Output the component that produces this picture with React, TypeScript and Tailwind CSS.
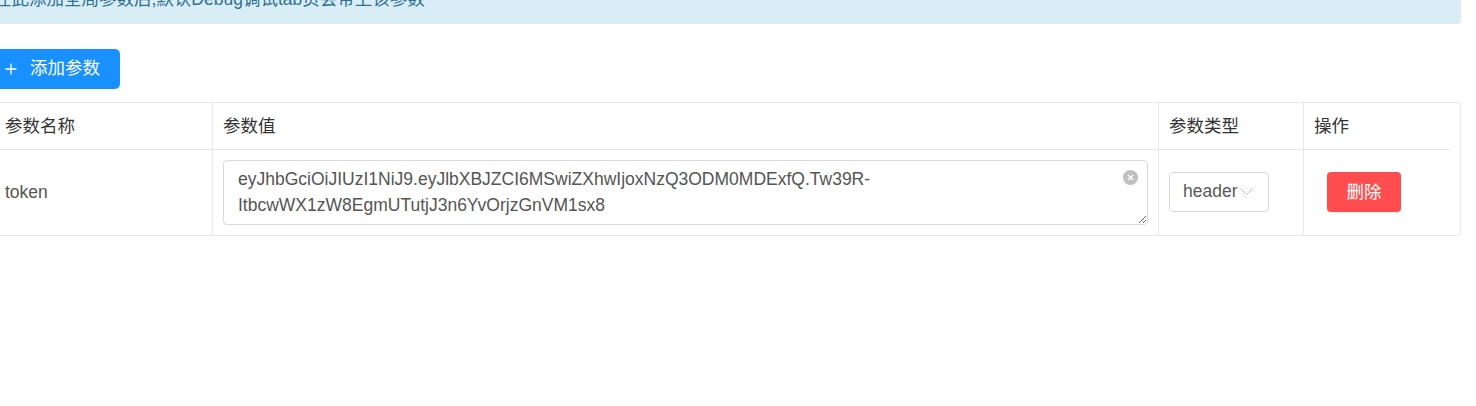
import React from 'react';

const token =
  'eyJhbGciOiJIUzI1NiJ9.eyJlbXBJZCI6MSwiZXhwIjoxNzQ3ODM0MDExfQ.Tw39R-ItbcwWX1zW8EgmUTutjJ3n6YvOrjzGnVM1sx8';

const GlobalParams: React.FC = () => {
  return (
    <div
      className="w-[1476px] h-[406px] overflow-hidden bg-white text-[17.5px]"
      style={{ fontFamily: '"Liberation Sans", "Noto Sans CJK SC", sans-serif' }}
    >
      <div className="w-[1461px] flex flex-col">
        {/* info banner, scrolled partly out of view */}
        <div className="-mt-[26px] -ml-[27px] py-[13px] pl-[21px] bg-[#d9edf7] text-[#31708f] leading-[24px] rounded-[4px] whitespace-nowrap">
          在此添加全局参数后,默认Debug调试tab页会带上该参数
        </div>

        <button className="mt-[25px] -ml-[14px] w-[134px] h-[40px] flex items-center pl-[19px] bg-[#1890ff] text-white rounded-[5px]">
          <svg width="12" height="12" viewBox="0 0 12 12" className="shrink-0">
            <path d="M6 0.5v11M0.5 6h11" stroke="white" strokeWidth="1.3" />
          </svg>
          <span className="ml-[13px] leading-none">添加参数</span>
        </button>

        <div className="mt-[13px] -ml-[6px] border border-[#e8e8e8] rounded-[3px] text-[#333]">
          <div className="grid grid-cols-[218px_946px_145px_1fr] h-[47px]">
            <div className="flex items-center pl-[10px] border-r border-b border-[#e8e8e8]">参数名称</div>
            <div className="flex items-center pl-[10px] border-r border-b border-[#e8e8e8]">参数值</div>
            <div className="flex items-center pl-[10px] border-r border-b border-[#e8e8e8]">参数类型</div>
            <div className="flex items-center pl-[10px] border-b border-[#e8e8e8] mr-[10px]">操作</div>
          </div>
          <div className="grid grid-cols-[218px_946px_145px_1fr] h-[85px]">
            <div className="flex items-center pl-[10px] border-r border-[#e8e8e8] text-[#555]">token</div>
            <div className="pt-[10px] px-[10px] border-r border-[#e8e8e8]">
              <div className="relative w-full">
                <textarea
                  readOnly
                  defaultValue={token}
                  className="block w-full h-[65px] border border-[#d9d9d9] rounded-[4px] pt-[5px] pl-[14px] pr-[32px] leading-[26px] text-[#555] outline-none bg-white"
                  style={{ fontFamily: '"Liberation Sans", sans-serif' }}
                />
                <span className="absolute right-[10px] top-[10px] w-[15px] h-[15px] rounded-full bg-[#bfbfbf] flex items-center justify-center">
                  <svg width="7" height="7" viewBox="0 0 7 7">
                    <path d="M1 1l5 5M6 1l-5 5" stroke="white" strokeWidth="1.3" />
                  </svg>
                </span>
              </div>
            </div>
            <div className="flex items-center pl-[10px] pb-[1px] border-r border-[#e8e8e8]">
              <div className="w-[100px] h-[40px] border border-[#d9d9d9] rounded-[4px] flex items-center pl-[13px] pb-[2px] text-[#595959]">
                <span>header</span>
                <svg width="13" height="8" viewBox="0 0 13 8" className="ml-[2px] mt-[2px]">
                  <path d="M0.5 0.5l6 6 6-6" fill="none" stroke="#c0c0c0" strokeWidth="1" />
                </svg>
              </div>
            </div>
            <div className="flex items-center pl-[23px] pb-[1px]">
              <button className="w-[74px] h-[40px] rounded-[4px] bg-[#ff4d4f] text-white shadow-[0_1px_2px_rgba(0,0,0,0.08)]">
                删除
              </button>
            </div>
          </div>
        </div>
      </div>
    </div>
  );
};

export default GlobalParams;
